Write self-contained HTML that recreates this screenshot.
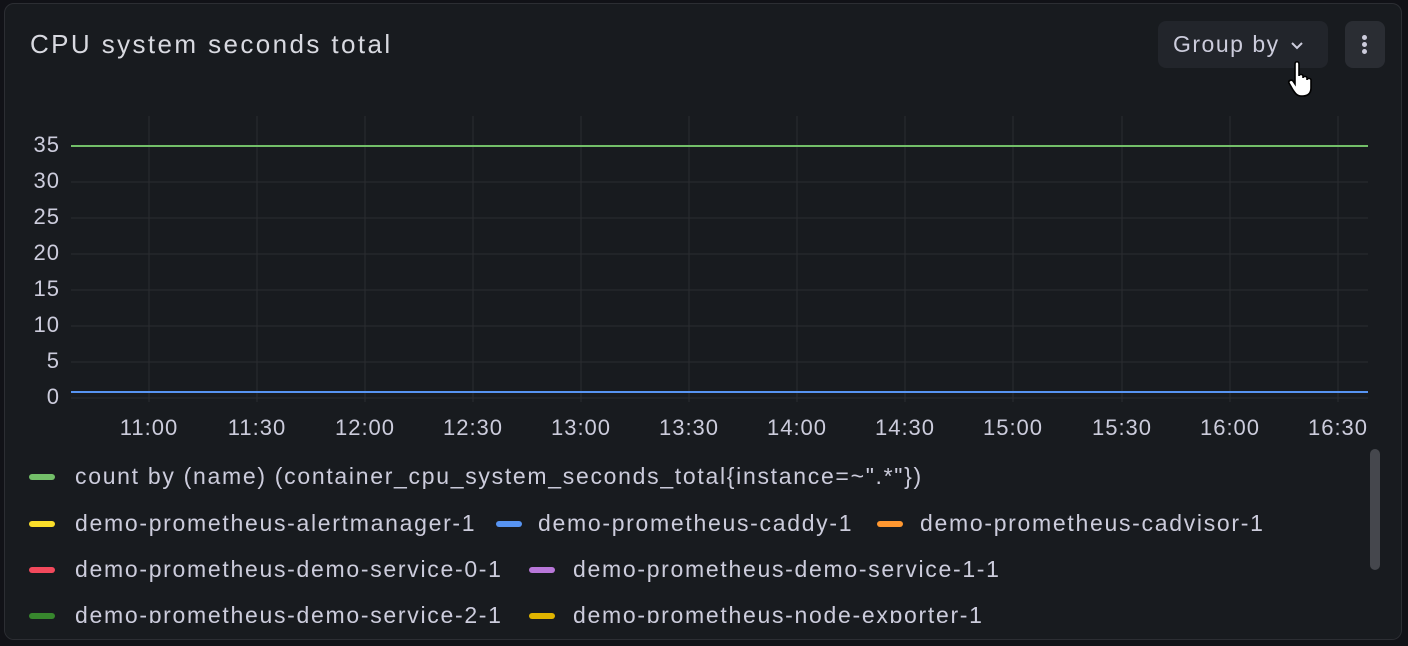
<!DOCTYPE html><html><head><style>
body{margin:0;width:1408px;height:646px;background:#111217;font-family:"Liberation Sans",sans-serif;color:#ccccdc;overflow:hidden;position:relative}
.panel{position:absolute;left:4px;top:3px;width:1396px;height:635px;background:#181b1f;border:1px solid #2c2e33;border-radius:10px;overflow:hidden}
.t{position:absolute;white-space:nowrap}
.yl{position:absolute;left:0;width:55px;text-align:right;font-size:22px;line-height:22px;letter-spacing:1px}
.xl{position:absolute;top:411px;font-size:22px;letter-spacing:1px;width:90px;margin-left:-45px;text-align:center}
.lg{position:absolute;font-size:23px;letter-spacing:1.7px;white-space:nowrap;line-height:24px}
.sw{position:absolute;width:26px;height:6px;border-radius:3px}
</style></head><body>
<div class="panel">
<div class="t" style="left:25px;top:25px;font-size:26px;letter-spacing:2.4px;color:#d8d9e0">CPU system seconds total</div>
<div style="position:absolute;left:1153px;top:17px;width:170px;height:47px;background:#22252b;border-radius:8px"></div>
<div class="t" style="left:1168px;top:27px;font-size:23px;letter-spacing:1.5px">Group by</div>
<svg style="position:absolute;left:1285px;top:37px" width="14" height="10"><path d="M2 2l5 5 5-5" stroke="#ccccdc" stroke-width="2" fill="none"/></svg>
<div style="position:absolute;left:1340px;top:17px;width:40px;height:47px;background:#2a2d33;border-radius:8px"></div>
<div style="position:absolute;left:1357px;top:31px;width:5px;height:5px;border-radius:50%;background:#ccccdc;box-shadow:0 7px 0 #ccccdc,0 14px 0 #ccccdc"></div>
<svg style="position:absolute;left:1282px;top:56px" width="30" height="40"><path d="M8 4c0-3 4-3 4 0v12c0-2 4-2 4 0v2c0-2 4-2 4 0v2c0-2 4-2 4 0v8c0 5-3 8-8 8h-2c-4 0-6-3-8-6l-4-7c-1-2 2-4 4-2l2 3z" fill="#fff" stroke="#000" stroke-width="1.6"/></svg>
<svg style="position:absolute;left:0;top:0" width="1396" height="420">
<g stroke="#2a2c31" stroke-width="1">
<line x1="66" y1="142" x2="1363" y2="142"/><line x1="66" y1="178" x2="1363" y2="178"/><line x1="66" y1="214" x2="1363" y2="214"/><line x1="66" y1="250" x2="1363" y2="250"/><line x1="66" y1="286" x2="1363" y2="286"/><line x1="66" y1="322" x2="1363" y2="322"/><line x1="66" y1="358" x2="1363" y2="358"/><line x1="66" y1="394" x2="1363" y2="394"/>
<line x1="144" y1="112" x2="144" y2="398"/><line x1="252" y1="112" x2="252" y2="398"/><line x1="360" y1="112" x2="360" y2="398"/><line x1="468" y1="112" x2="468" y2="398"/><line x1="576" y1="112" x2="576" y2="398"/><line x1="684" y1="112" x2="684" y2="398"/><line x1="792" y1="112" x2="792" y2="398"/><line x1="900" y1="112" x2="900" y2="398"/><line x1="1008" y1="112" x2="1008" y2="398"/><line x1="1117" y1="112" x2="1117" y2="398"/><line x1="1225" y1="112" x2="1225" y2="398"/><line x1="1333" y1="112" x2="1333" y2="398"/>
</g>
<line x1="66" y1="142" x2="1363" y2="142" stroke="#73bf69" stroke-width="2"/>
<line x1="66" y1="388" x2="1363" y2="388" stroke="#5794f2" stroke-width="2"/>
</svg>
<div class="yl" style="top:130px">35</div><div class="yl" style="top:166px">30</div><div class="yl" style="top:202px">25</div><div class="yl" style="top:238px">20</div><div class="yl" style="top:274px">15</div><div class="yl" style="top:310px">10</div><div class="yl" style="top:346px">5</div><div class="yl" style="top:382px">0</div>
<div class="xl" style="left:144px">11:00</div><div class="xl" style="left:252px">11:30</div><div class="xl" style="left:360px">12:00</div><div class="xl" style="left:468px">12:30</div><div class="xl" style="left:576px">13:00</div><div class="xl" style="left:684px">13:30</div><div class="xl" style="left:792px">14:00</div><div class="xl" style="left:900px">14:30</div><div class="xl" style="left:1008px">15:00</div><div class="xl" style="left:1117px">15:30</div><div class="xl" style="left:1225px">16:00</div><div class="xl" style="left:1333px">16:30</div>
<div class="sw" style="left:24px;top:470px;background:#73bf69"></div><div class="lg" style="left:70px;top:460px">count by (name) (container_cpu_system_seconds_total{instance=~".*"})</div>
<div class="sw" style="left:24px;top:517px;background:#fade2a"></div><div class="lg" style="left:70px;top:507px">demo-prometheus-alertmanager-1</div>
<div class="sw" style="left:491px;top:517px;background:#5794f2"></div><div class="lg" style="left:533px;top:507px">demo-prometheus-caddy-1</div>
<div class="sw" style="left:872px;top:517px;background:#ff9830"></div><div class="lg" style="left:915px;top:507px">demo-prometheus-cadvisor-1</div>
<div class="sw" style="left:24px;top:563px;background:#f2495c"></div><div class="lg" style="left:70px;top:553px">demo-prometheus-demo-service-0-1</div>
<div class="sw" style="left:524px;top:563px;background:#b877d9"></div><div class="lg" style="left:568px;top:553px">demo-prometheus-demo-service-1-1</div>
<div class="sw" style="left:24px;top:609px;background:#37872d"></div><div class="lg" style="left:70px;top:599px">demo-prometheus-demo-service-2-1</div>
<div class="sw" style="left:524px;top:609px;background:#e0b400"></div><div class="lg" style="left:568px;top:599px">demo-prometheus-node-exporter-1</div>
<div style="position:absolute;left:0;top:619px;width:1396px;height:20px;background:#181b1f"></div>
<div style="position:absolute;left:1365px;top:445px;width:10px;height:121px;border-radius:5px;background:#45474d"></div>
</div>
</body></html>
